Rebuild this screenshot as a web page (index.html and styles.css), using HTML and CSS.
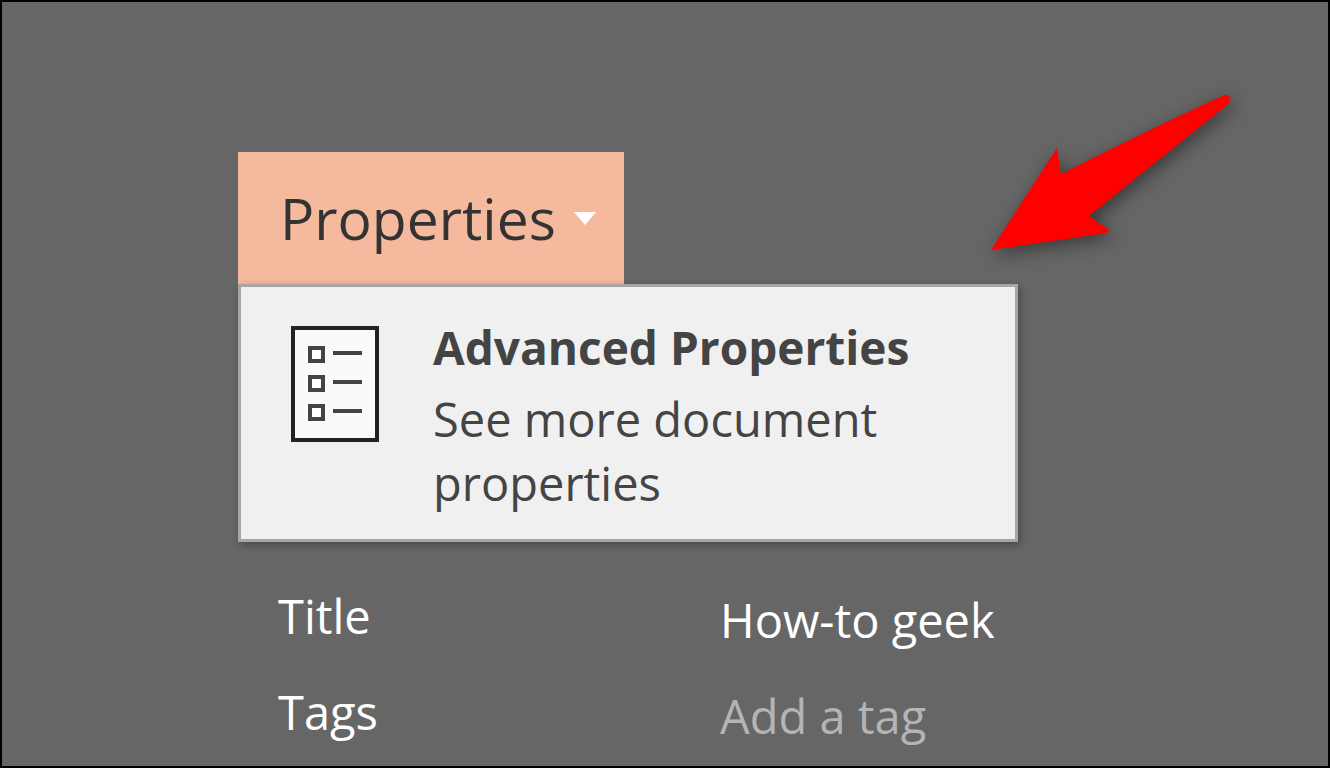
FILE: index.html
```
<!DOCTYPE html>
<html lang="en">
<head>
    <meta charset="UTF-8">
    <meta name="viewport" content="width=device-width, initial-scale=1.0">
    <title>Properties</title>
    <link rel="stylesheet" href="styles.css">
</head>
<body>
    <main class="panel">
        <button class="properties-button" type="button" aria-expanded="true">
            Properties
            <svg class="caret" viewBox="0 0 22 13" aria-hidden="true">
                <path d="M0 0H22L11 13Z"/>
            </svg>
        </button>

        <div class="menu">
            <button class="menu-item" type="button">
                <svg class="menu-icon" viewBox="0 0 88 116" aria-hidden="true">
                    <rect class="page" x="2" y="2" width="84" height="112"/>
                    <g class="boxes">
                        <rect x="19" y="22" width="13" height="13"/>
                        <rect x="19" y="51" width="13" height="13"/>
                        <rect x="19" y="80" width="13" height="13"/>
                    </g>
                    <path class="lines" d="M42 27H71M42 56H71M42 85H71"/>
                </svg>
                <span class="menu-text">
                    <strong>Advanced Properties</strong>
                    <span>See more document properties</span>
                </span>
            </button>
        </div>

        <form class="fields">
            <label for="title">Title</label>
            <input id="title" type="text" value="How-to geek">
            <label for="tags">Tags</label>
            <input id="tags" type="text" placeholder="Add a tag">
        </form>

        <svg class="arrow" viewBox="0 0 290 200" aria-hidden="true">
            <path d="M21 180L87 78L91 104Q170 64 254 25Q262 24 260 31Q258 35 252 39L119 146L139 160L137 163Z"/>
        </svg>
    </main>
</body>
</html>
```
FILE: styles.css
```
* {
    box-sizing: border-box;
}
body {
    margin: 0;
    font-family: 'Open Sans', 'Noto Sans', sans-serif;
    background: #666;
}
button,
input {
    font: inherit;
    border: none;
    border-radius: 0;
}
.panel {
    position: relative;
    min-height: 100vh;
    padding: 150px 20px 0 236px;
    border: 2px solid #000;
    background: #666;
}
.properties-button {
    display: flex;
    align-items: center;
    gap: 18px;
    height: 132px;
    padding: 0 28px 0 42px;
    background: #f5b99e;
    color: #333;
    font-size: 57px;
    cursor: pointer;
}
.caret {
    width: 22px;
    height: 13px;
    fill: #fff;
}
.menu {
    max-width: 780px;
    border: 3px solid #a6a6a6;
    background: #f0f0f0;
    box-shadow: 2px 3px 8px rgba(0, 0, 0, 0.3);
}
.menu-item {
    display: flex;
    align-items: flex-start;
    gap: 54px;
    width: 100%;
    padding: 28px 50px 24px;
    background: none;
    color: #444;
    text-align: left;
    cursor: pointer;
}
.menu-icon {
    flex: none;
    width: 88px;
    height: 116px;
    margin-top: 11px;
    fill: none;
}
.page {
    fill: #f8fbfa;
    stroke: #222;
    stroke-width: 4;
}
.boxes {
    fill: #fff;
    stroke: #444;
    stroke-width: 4;
}
.lines {
    stroke: #444;
    stroke-width: 4;
}
.menu-text {
    display: flex;
    flex-direction: column;
    gap: 8px;
    font-size: 47px;
    line-height: 64px;
}
.menu-text strong {
    font-size: 46px;
    font-weight: 700;
}
.fields {
    display: grid;
    grid-template-columns: 442px 1fr;
    row-gap: 32px;
    padding: 42px 0 0 40px;
    color: #fff;
    font-size: 47px;
    line-height: 64px;
}
.fields input {
    width: 100%;
    height: 72px;
    margin-bottom: -8px;
    padding: 0;
    background: none;
    color: #fff;
    font-weight: 500;
}
.fields input::placeholder {
    color: #b4b4b4;
    font-weight: 400;
    opacity: 1;
}
.arrow {
    position: absolute;
    top: 68px;
    left: 968px;
    width: 290px;
    height: 200px;
    fill: #f00;
    filter: drop-shadow(3px 5px 9px rgba(0, 0, 0, 0.45));
}
```
